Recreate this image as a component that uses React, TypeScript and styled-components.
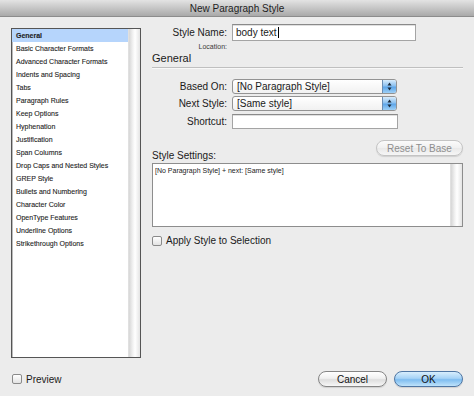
import React from 'react';
import styled, { createGlobalStyle } from 'styled-components';

const Global = createGlobalStyle`
  html, body { margin: 0; padding: 0; background: #ececec; }
  body { font-family: "Liberation Sans", Arial, sans-serif; color: #1a1a1a; }
`;

const Window = styled.div`
  width: 474px;
  height: 396px;
  display: flex;
  flex-direction: column;
  background: #ececec;
  overflow: hidden;
`;

const TitleBar = styled.div`
  height: 16px;
  flex: none;
  background: linear-gradient(#e3e3e3, #a9a9a9);
  border-bottom: 1px solid #8c8c8c;
  display: flex;
  align-items: center;
  justify-content: center;
  font-size: 10px;
  color: #1e1e1e;
`;

const Main = styled.div`
  flex: none;
  height: 341px;
  box-sizing: border-box;
  padding: 7px 11px 0 11px;
  display: flex;
  gap: 11px;
`;

const ListBox = styled.div`
  margin-top: 4px;
  width: 130px;
  height: 330px;
  box-sizing: border-box;
  border: 1px solid #555;
  background: #fff;
  display: flex;
  box-shadow: inset 1px 1px 0 #bbb;
`;

const ListItems = styled.div`
  flex: 1;
  display: flex;
  flex-direction: column;
`;

const ListItem = styled.div<{ $selected?: boolean }>`
  height: 13px;
  line-height: 13px;
  padding-left: 4px;
  font-size: 7px;
  color: #1c1c1c;
  -webkit-text-stroke: 0.1px #1c1c1c;
  white-space: nowrap;
  background: ${(p) => (p.$selected ? '#b6d5fc' : 'transparent')};
  font-weight: ${(p) => (p.$selected ? 700 : 400)};
`;

const ScrollTrack = styled.div`
  width: 11px;
  flex: none;
  background: linear-gradient(to right, #d6d6d6, #f2f2f2 35%, #ffffff 55%, #e4e4e4);
  border-left: 1px solid #e0e0e0;
`;

const Panel = styled.div`
  width: 311px;
  display: flex;
  flex-direction: column;
`;

const FormRow = styled.div<{ $mt?: number; $h?: number }>`
  display: grid;
  grid-template-columns: 75px auto;
  column-gap: 5px;
  align-items: center;
  margin-top: ${(p) => p.$mt ?? 0}px;
  height: ${(p) => p.$h ?? 15}px;
`;

const Label = styled.div<{ $size?: number }>`
  text-align: right;
  font-size: ${(p) => p.$size ?? 10}px;
  color: ${(p) => (p.$size && p.$size < 9 ? '#3a3a3a' : '#1a1a1a')};
  white-space: nowrap;
`;

const TextField = styled.div<{ $w: number; $h: number }>`
  width: ${(p) => p.$w}px;
  height: ${(p) => p.$h}px;
  box-sizing: border-box;
  border: 1px solid #a4a4a4;
  border-top-color: #8a8a8a;
  background: #fff;
  box-shadow: inset 0 1px 0 #e0e0e0;
  font-size: 10px;
  display: flex;
  align-items: center;
  padding-left: 3px;
`;

const Caret = styled.span`
  display: inline-block;
  width: 1px;
  height: 11px;
  background: #000;
  margin-left: 1px;
`;

const SectionTitle = styled.div`
  margin-top: 1px;
  font-size: 11px;
  line-height: 13px;
  height: 13px;
`;

const Separator = styled.div`
  margin-top: 2px;
  height: 1px;
  background: #bfbfbf;
  border-bottom: 1px solid #f8f8f8;
`;

const Popup = styled.div`
  width: 165px;
  height: 15px;
  box-sizing: border-box;
  border: 1px solid #939393;
  border-radius: 3px;
  background: linear-gradient(#ffffff, #f1f1f1);
  display: flex;
  overflow: hidden;
`;

const PopupText = styled.div`
  flex: 1;
  display: flex;
  align-items: center;
  padding-left: 4px;
  font-size: 10px;
  white-space: nowrap;
`;

const Stepper = styled.div`
  width: 13px;
  flex: none;
  border-left: 1px solid #6a8db3;
  background: linear-gradient(#d8ecfc, #8cc1f0 45%, #5ea6e9 55%, #9ed0f6);
  display: flex;
  align-items: center;
  justify-content: center;
`;

const SettingsHeader = styled.div`
  margin-top: 11px;
  height: 23px;
  display: flex;
  justify-content: space-between;
`;

const SettingsLabel = styled.div`
  align-self: flex-end;
  font-size: 10px;
  line-height: 12px;
  margin-bottom: 1px;
`;

const PillButton = styled.div<{ $w: number; $kind?: 'default' | 'primary' | 'disabled' }>`
  width: ${(p) => p.$w}px;
  height: 16px;
  box-sizing: border-box;
  border-radius: 8px;
  border: 1px solid
    ${(p) => (p.$kind === 'primary' ? '#4f76a3' : p.$kind === 'disabled' ? '#c4c4c4' : '#858585')};
  background: ${(p) =>
    p.$kind === 'primary'
      ? 'linear-gradient(#d8eefd, #a6d3f6 45%, #7fbdf0 55%, #bfe3fb)'
      : p.$kind === 'disabled'
      ? 'linear-gradient(#fbfbfb, #f0f0f0 50%, #e9e9e9 51%, #f6f6f6)'
      : 'linear-gradient(#ffffff, #f0f0f0 45%, #dedede 55%, #f7f7f7)'};
  color: ${(p) => (p.$kind === 'disabled' ? '#8e8e8e' : '#111')};
  font-size: 10px;
  display: flex;
  align-items: center;
  justify-content: center;
  box-shadow: 0 1px 1px rgba(0, 0, 0, 0.12);
`;

const TextArea = styled.div`
  height: 64px;
  box-sizing: border-box;
  border: 1px solid #8d8d8d;
  background: #fff;
  display: flex;
`;

const TextAreaContent = styled.div`
  flex: 1;
  font-size: 7px;
  color: #222;
  padding: 2px 2px;
  line-height: 9px;
`;

const CheckRow = styled.div<{ $mt?: number }>`
  display: flex;
  align-items: center;
  gap: 4px;
  margin-top: ${(p) => p.$mt ?? 0}px;
  font-size: 10px;
`;

const CheckBox = styled.div`
  width: 10px;
  height: 10px;
  box-sizing: border-box;
  border: 1px solid #8a8a8a;
  border-radius: 2px;
  background: linear-gradient(#ffffff, #e3e3e3);
  flex: none;
`;

const Footer = styled.div`
  margin-top: 13px;
  height: 16px;
  padding: 0 11px 0 12px;
  display: flex;
  align-items: center;
  justify-content: space-between;
`;

const ButtonGroup = styled.div`
  display: flex;
  gap: 7px;
`;

const items = [
  'General',
  'Basic Character Formats',
  'Advanced Character Formats',
  'Indents and Spacing',
  'Tabs',
  'Paragraph Rules',
  'Keep Options',
  'Hyphenation',
  'Justification',
  'Span Columns',
  'Drop Caps and Nested Styles',
  'GREP Style',
  'Bullets and Numbering',
  'Character Color',
  'OpenType Features',
  'Underline Options',
  'Strikethrough Options',
];

const Arrows = () => (
  <svg width="5" height="9" viewBox="0 0 5 9">
    <path d="M2.5 0.5 L4.5 3.5 L0.5 3.5 Z" fill="#1b2a3a" />
    <path d="M2.5 8.5 L4.5 5.5 L0.5 5.5 Z" fill="#1b2a3a" />
  </svg>
);

export default function App() {
  return (
    <>
      <Global />
      <Window>
        <TitleBar>New Paragraph Style</TitleBar>
        <Main>
          <ListBox>
            <ListItems>
              {items.map((it, i) => (
                <ListItem key={it} $selected={i === 0}>
                  {it}
                </ListItem>
              ))}
            </ListItems>
            <ScrollTrack />
          </ListBox>
          <Panel>
            <FormRow $h={17}>
              <Label>Style Name:</Label>
              <TextField $w={184} $h={17}>
                body text
                <Caret />
              </TextField>
            </FormRow>
            <FormRow $mt={1} $h={9}>
              <Label $size={7}>Location:</Label>
              <span />
            </FormRow>
            <SectionTitle>General</SectionTitle>
            <Separator />
            <FormRow $mt={10}>
              <Label>Based On:</Label>
              <Popup>
                <PopupText>[No Paragraph Style]</PopupText>
                <Stepper>
                  <Arrows />
                </Stepper>
              </Popup>
            </FormRow>
            <FormRow $mt={2}>
              <Label>Next Style:</Label>
              <Popup>
                <PopupText>[Same style]</PopupText>
                <Stepper>
                  <Arrows />
                </Stepper>
              </Popup>
            </FormRow>
            <FormRow $mt={3}>
              <Label>Shortcut:</Label>
              <TextField $w={166} $h={15} />
            </FormRow>
            <SettingsHeader>
              <SettingsLabel>Style Settings:</SettingsLabel>
              <PillButton $w={87} $kind="disabled">
                Reset To Base
              </PillButton>
            </SettingsHeader>
            <TextArea>
              <TextAreaContent>[No Paragraph Style] + next: [Same style]</TextAreaContent>
              <ScrollTrack />
            </TextArea>
            <CheckRow $mt={8}>
              <CheckBox />
              Apply Style to Selection
            </CheckRow>
          </Panel>
        </Main>
        <Footer>
          <CheckRow>
            <CheckBox />
            Preview
          </CheckRow>
          <ButtonGroup>
            <PillButton $w={69}>Cancel</PillButton>
            <PillButton $w={69} $kind="primary">
              OK
            </PillButton>
          </ButtonGroup>
        </Footer>
      </Window>
    </>
  );
}
